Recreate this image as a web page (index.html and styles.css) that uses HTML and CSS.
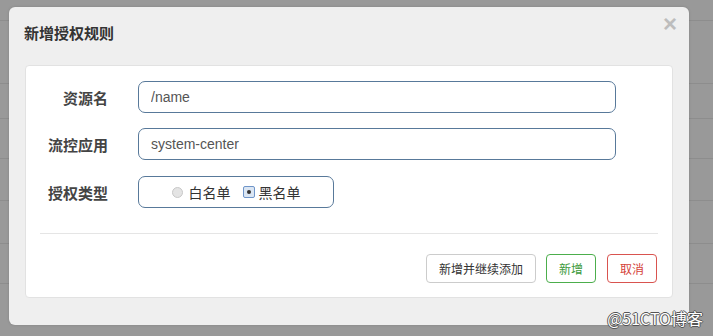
FILE: index.html
```html
<!DOCTYPE html>
<html lang="zh-CN">

<head>
    <meta charset="UTF-8">
    <title>新增授权规则</title>
    <link rel="stylesheet" href="styles.css">
</head>

<body>

    <!-- Table behind the modal overlay -->
    <div class="backdrop">
        <div class="bg-row r1"></div>
        <div class="bg-row r2"></div>
        <div class="bg-row r3"></div>
        <div class="bg-row r4"></div>
        <div class="bg-row r5"></div>
        <div class="bg-row r6"></div>
        <div class="bg-row r7"></div>
    </div>

    <div class="modal">
        <div class="modal-header">
            <h4 class="modal-title">新增授权规则</h4>
            <span class="close">&times;</span>
        </div>

        <div class="panel">
            <form class="rule-form">
                <div class="form-row">
                    <label class="form-label">资源名</label>
                    <input class="form-input" type="text" value="/name">
                </div>

                <div class="form-row">
                    <label class="form-label">流控应用</label>
                    <input class="form-input" type="text" value="system-center">
                </div>

                <div class="form-row">
                    <label class="form-label">授权类型</label>
                    <div class="radio-box">
                        <span class="radio"></span>
                        <span class="radio-text">白名单</span>
                        <span class="radio checked"><span class="dot"></span></span>
                        <span class="radio-text">黑名单</span>
                    </div>
                </div>

                <hr class="divider">

                <div class="actions">
                    <button type="button" class="btn btn-default">新增并继续添加</button>
                    <button type="button" class="btn btn-success">新增</button>
                    <button type="button" class="btn btn-danger">取消</button>
                </div>
            </form>
        </div>
    </div>

    <span class="watermark">@51CTO博客</span>

</body>

</html>
```

FILE: styles.css
```css
/* General */
body {
    margin: 0;
    width: 713px;
    height: 336px;
    overflow: hidden;
    position: relative;
    background: #999999;
    font-family: 'Liberation Sans', 'Noto Sans CJK SC', sans-serif;
}

/* Background table (dimmed) */
.backdrop {
    display: flex;
    flex-direction: column;
}

.bg-row {
    border-bottom: 1px solid #8d8d8d;
    box-sizing: border-box;
}

.r1 { height: 21px; }
.r2 { height: 63px; }
.r3 { height: 35px; }
.r4 { height: 40px; }
.r5 { height: 42px; }
.r6 { height: 43px; }
.r7 { height: 40px; }

/* Modal */
.modal {
    position: absolute;
    left: 9px;
    top: 7px;
    width: 680px;
    height: 318px;
    box-sizing: border-box;
    padding: 0 16px;
    background: #efefef;
    border-radius: 6px;
    box-shadow: 0 0 3px rgba(0, 0, 0, 0.15);
}

.modal-header {
    height: 58px;
    display: flex;
    justify-content: space-between;
    align-items: flex-start;
}

.modal-title {
    margin: 17px 0 0 -1px;
    font-size: 15px;
    line-height: 18px;
    font-weight: bold;
    color: #333;
    font-family: 'Noto Sans CJK SC', sans-serif;
}

.close {
    margin: 5px -4px 0 0;
    font-size: 24px;
    line-height: 24px;
    font-weight: bold;
    color: #bdbdbd;
    font-family: 'Liberation Sans', sans-serif;
}

/* White panel */
.panel {
    height: 233px;
    box-sizing: border-box;
    padding: 15px;
    background: #fff;
    border: 1px solid #e2e2e2;
    border-radius: 4px;
}

.form-row {
    display: flex;
    align-items: center;
    height: 32px;
    margin-bottom: 15px;
}

.form-row:nth-child(2) {
    margin-bottom: 16px;
}

.form-label {
    width: 67px;
    margin-right: 30px;
    text-align: right;
    font-size: 15px;
    font-weight: bold;
    color: #444;
    font-family: 'Noto Sans CJK SC', sans-serif;
}

.form-input {
    width: 478px;
    height: 32px;
    box-sizing: border-box;
    padding: 0 12px;
    border: 1px solid #58799a;
    border-radius: 7px;
    font-size: 14px;
    color: #555;
    font-family: 'Liberation Sans', sans-serif;
    outline: none;
    background: #fff;
}

/* Radio group */
.radio-box {
    width: 196px;
    height: 32px;
    box-sizing: border-box;
    border: 1px solid #58799a;
    border-radius: 7px;
    display: flex;
    justify-content: center;
    align-items: center;
    font-family: 'Noto Sans CJK SC', sans-serif;
    font-size: 14px;
    color: #333;
}

.radio {
    width: 9px;
    height: 9px;
    border-radius: 50%;
    border: 1px solid #c8c8c8;
    background: #e4e4e4;
    margin-right: 6px;
}

.radio.checked {
    width: 10px;
    height: 10px;
    border-radius: 2px;
    border: 1px solid #6f95c9;
    background: #dbe6f3;
    display: flex;
    justify-content: center;
    align-items: center;
    margin-left: 12px;
    margin-right: 4px;
}

.dot {
    width: 4px;
    height: 4px;
    border-radius: 50%;
    background: #333;
}

.radio-text {
    line-height: 16px;
}

/* Divider */
.divider {
    margin: 25px -1px 0 -1px;
    border: none;
    border-top: 1px solid #e5e5e5;
}

/* Buttons */
.actions {
    display: flex;
    justify-content: flex-end;
    gap: 10px;
    margin-top: 20px;
}

.btn {
    height: 29px;
    padding: 0 12px;
    background: #fff;
    border-radius: 4px;
    font-size: 12px;
    font-family: 'Noto Sans CJK SC', sans-serif;
    cursor: pointer;
}

.btn-default {
    border: 1px solid #cccccc;
    color: #333;
}

.btn-success {
    border: 1px solid #4cae4c;
    color: #3c9a3c;
}

.btn-danger {
    border: 1px solid #d9534f;
    color: #d43f3a;
    margin-left: 1px;
}

/* Watermark */
.watermark {
    position: absolute;
    right: 10px;
    bottom: 6px;
    font-size: 16px;
    color: #fff;
    font-family: 'Noto Sans CJK SC', sans-serif;
    text-shadow: -1px 0 #555, 1px 0 #555, 0 -1px #555, 0 1px #555;
}
```
